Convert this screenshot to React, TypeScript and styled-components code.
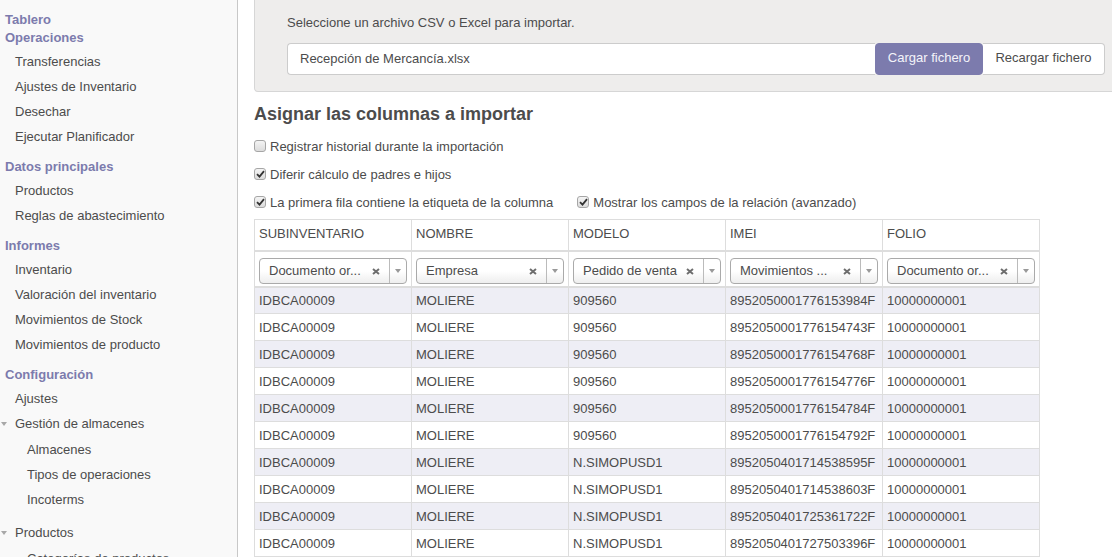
import React from "react";
import styled, { createGlobalStyle } from "styled-components";

const Global = createGlobalStyle`
  html, body { margin: 0; padding: 0; }
  body {
    font-family: "Liberation Sans", Arial, Helvetica, sans-serif;
    font-size: 13px;
    color: #4c4c4c;
    background: #fff;
    overflow: hidden;
  }
  * { box-sizing: border-box; }
`;

const Shell = styled.div`
  display: flex;
  width: 1112px;
  height: 557px;
  overflow: hidden;
`;

const Sidebar = styled.nav`
  width: 238px;
  flex: none;
  background: #f9f9f9;
  border-right: 1px solid #c8c8c8;
  padding-top: 11px;
  overflow: hidden;
`;

const SectionHeader = styled.div`
  padding-left: 5px;
  line-height: 18px;
  font-weight: bold;
  color: #7c7bad;
  white-space: nowrap;
`;

const MenuList = styled.ul<{ $nested?: boolean }>`
  list-style: none;
  margin: ${(p) => (p.$nested ? "1px 0 8px" : "1.5px 0 9.5px")};
  padding: 0;
`;

const MenuItem = styled.li<{ $level: number }>`
  position: relative;
  height: 25px;
  line-height: 25px;
  padding-left: ${(p) => (p.$level === 2 ? 27 : 15)}px;
  color: #4c4c4c;
  white-space: nowrap;
`;

const Caret = styled.span`
  position: absolute;
  left: 1px;
  top: 11px;
  width: 0;
  height: 0;
  border-left: 3px solid transparent;
  border-right: 3px solid transparent;
  border-top: 4px solid #a8a8a8;
`;

const Main = styled.main`
  flex: 1;
  min-width: 0;
  padding-left: 16px;
  overflow: hidden;
`;

const ImportPanel = styled.section`
  margin-right: -30px;
  background: #eeedec;
  border: 1px solid #d6d6d6;
  border-top: none;
  border-radius: 0 0 4px 4px;
  padding: 14px 32px 16px;
`;

const PanelLabel = styled.div`
  line-height: 18px;
  margin-bottom: 11px;
`;

const FileRow = styled.div`
  display: flex;
  height: 32px;
`;

const FileInput = styled.div`
  width: 588px;
  flex: none;
  background: #fff;
  border: 1px solid #ccc;
  border-right: none;
  border-radius: 4px 0 0 4px;
  padding-left: 12px;
  line-height: 30px;
  white-space: nowrap;
`;

const Button = styled.button<{ $primary?: boolean }>`
  font-family: inherit;
  font-size: 13px;
  height: 32px;
  line-height: 28px;
  padding: 0 0 2px;
  border: 1px solid ${(p) => (p.$primary ? "#7c7bad" : "#ccc")};
  border-radius: ${(p) => (p.$primary ? "4px" : "0 4px 4px 0")};
  background: ${(p) => (p.$primary ? "#7c7bad" : "#fff")};
  color: ${(p) => (p.$primary ? "#f4f4fa" : "#4c4c4c")};
  width: ${(p) => (p.$primary ? "108px" : "122px")};
  ${(p) => (p.$primary ? "" : "border-left: none;")}
  cursor: pointer;
  white-space: nowrap;
`;

const Heading = styled.h2`
  margin: 11px 0 7px 0;
  font-size: 18px;
  line-height: 22px;
  font-weight: bold;
  color: #4c4c4c;
`;

const OptionRow = styled.div`
  display: flex;
  gap: 24px;
  height: 28px;
  align-items: center;
`;

const OptionLabel = styled.label`
  display: flex;
  align-items: center;
  gap: 4px;
  white-space: nowrap;
`;

const Box = styled.span`
  width: 12px;
  height: 12px;
  border: 1px solid #a6a6a6;
  border-radius: 3px;
  background: linear-gradient(#f4f4f4, #dcdcdc);
  display: inline-flex;
  align-items: center;
  justify-content: center;
  flex: none;
`;

const Check = ({ checked }: { checked: boolean }) => (
  <Box>
    {checked && (
      <svg width="9" height="8" viewBox="0 0 9 8">
        <path d="M1 4.2 L3.5 6.6 L8 1.2" fill="none" stroke="#333" strokeWidth="1.8" />
      </svg>
    )}
  </Box>
);

const Table = styled.table`
  margin-top: 3px;
  width: 786px;
  table-layout: fixed;
  border-collapse: collapse;
`;

const HeadCell = styled.th`
  text-align: left;
  font-weight: normal;
  height: 31px;
  padding: 6px 4px 0;
  line-height: 16px;
  vertical-align: top;
  border: 1px solid #ddd;
  border-bottom-width: 2px;
  white-space: nowrap;
`;

const SelectCell = styled.td`
  height: 36px;
  padding: 4px 4px 0;
  border: 1px solid #ddd;
  border-bottom-width: 2px;
`;

const Select = styled.div`
  display: flex;
  align-items: center;
  height: 26px;
  border: 1px solid #aaa;
  border-radius: 4px;
  background: linear-gradient(#fff 50%, #eee);
  overflow: hidden;
`;

const SelectText = styled.span`
  flex: 1;
  min-width: 0;
  padding-left: 9px;
  white-space: nowrap;
  overflow: hidden;
`;

const Clear = styled.span`
  width: 20px;
  display: flex;
  justify-content: flex-end;
  flex: none;
  padding: 2px 9px 0 0;
`;

const ArrowBox = styled.span`
  width: 17px;
  height: 100%;
  border-left: 1px solid #bbb;
  display: flex;
  align-items: center;
  justify-content: center;
  flex: none;
  &::after {
    content: "";
    border-left: 3px solid transparent;
    border-right: 3px solid transparent;
    border-top: 4px solid #999;
  }
`;

const DataRow = styled.tr<{ $odd: boolean }>`
  background: ${(p) => (p.$odd ? "#eeeef5" : "#fff")};
`;

const DataCell = styled.td`
  height: 27px;
  padding: 0 4px;
  border: 1px solid #ddd;
  white-space: nowrap;
  overflow: hidden;
`;

const ClearIcon = () => (
  <svg width="8" height="7" viewBox="0 0 8 7">
    <path d="M1 1 L7 6 M7 1 L1 6" stroke="#6e6e6e" strokeWidth="2" />
  </svg>
);

const menu = [
  { header: "Tablero" },
  {
    header: "Operaciones",
    items: ["Transferencias", "Ajustes de Inventario", "Desechar", "Ejecutar Planificador"],
  },
  { header: "Datos principales", items: ["Productos", "Reglas de abastecimiento"] },
  {
    header: "Informes",
    items: ["Inventario", "Valoración del inventario", "Movimientos de Stock", "Movimientos de producto"],
  },
];

const columns = [
  { name: "SUBINVENTARIO", field: "Documento or..." },
  { name: "NOMBRE", field: "Empresa" },
  { name: "MODELO", field: "Pedido de venta" },
  { name: "IMEI", field: "Movimientos ..." },
  { name: "FOLIO", field: "Documento or..." },
];

const rows = [
  ["909560", "8952050001776153984F"],
  ["909560", "8952050001776154743F"],
  ["909560", "8952050001776154768F"],
  ["909560", "8952050001776154776F"],
  ["909560", "8952050001776154784F"],
  ["909560", "8952050001776154792F"],
  ["N.SIMOPUSD1", "8952050401714538595F"],
  ["N.SIMOPUSD1", "8952050401714538603F"],
  ["N.SIMOPUSD1", "8952050401725361722F"],
  ["N.SIMOPUSD1", "8952050401727503396F"],
];

export default function App() {
  return (
    <>
      <Global />
      <Shell>
        <Sidebar>
          {menu.map((s) => (
            <React.Fragment key={s.header}>
              <SectionHeader>{s.header}</SectionHeader>
              {s.items && (
                <MenuList>
                  {s.items.map((i) => (
                    <MenuItem key={i} $level={1}>
                      {i}
                    </MenuItem>
                  ))}
                </MenuList>
              )}
            </React.Fragment>
          ))}
          <SectionHeader>Configuración</SectionHeader>
          <MenuList>
            <MenuItem $level={1}>Ajustes</MenuItem>
            <MenuItem $level={1}>
              <Caret />
              Gestión de almacenes
            </MenuItem>
            <MenuList $nested>
              <MenuItem $level={2}>Almacenes</MenuItem>
              <MenuItem $level={2}>Tipos de operaciones</MenuItem>
              <MenuItem $level={2}>Incoterms</MenuItem>
            </MenuList>
            <MenuItem $level={1}>
              <Caret />
              Productos
            </MenuItem>
            <MenuList $nested>
              <MenuItem $level={2}>Categorías de productos</MenuItem>
            </MenuList>
          </MenuList>
        </Sidebar>
        <Main>
          <ImportPanel>
            <PanelLabel>Seleccione un archivo CSV o Excel para importar.</PanelLabel>
            <FileRow>
              <FileInput>Recepción de Mercancía.xlsx</FileInput>
              <Button $primary>Cargar fichero</Button>
              <Button>Recargar fichero</Button>
            </FileRow>
          </ImportPanel>
          <Heading>Asignar las columnas a importar</Heading>
          <OptionRow>
            <OptionLabel>
              <Check checked={false} />
              Registrar historial durante la importación
            </OptionLabel>
          </OptionRow>
          <OptionRow>
            <OptionLabel>
              <Check checked />
              Diferir cálculo de padres e hijos
            </OptionLabel>
          </OptionRow>
          <OptionRow>
            <OptionLabel>
              <Check checked />
              La primera fila contiene la etiqueta de la columna
            </OptionLabel>
            <OptionLabel>
              <Check checked />
              Mostrar los campos de la relación (avanzado)
            </OptionLabel>
          </OptionRow>
          <Table>
            <thead>
              <tr>
                {columns.map((c) => (
                  <HeadCell key={c.name}>{c.name}</HeadCell>
                ))}
              </tr>
              <tr>
                {columns.map((c) => (
                  <SelectCell key={c.name}>
                    <Select>
                      <SelectText>{c.field}</SelectText>
                      <Clear>
                        <ClearIcon />
                      </Clear>
                      <ArrowBox />
                    </Select>
                  </SelectCell>
                ))}
              </tr>
            </thead>
            <tbody>
              {rows.map((r, i) => (
                <DataRow key={i} $odd={i % 2 === 0}>
                  <DataCell>IDBCA00009</DataCell>
                  <DataCell>MOLIERE</DataCell>
                  <DataCell>{r[0]}</DataCell>
                  <DataCell>{r[1]}</DataCell>
                  <DataCell>10000000001</DataCell>
                </DataRow>
              ))}
            </tbody>
          </Table>
        </Main>
      </Shell>
    </>
  );
}
